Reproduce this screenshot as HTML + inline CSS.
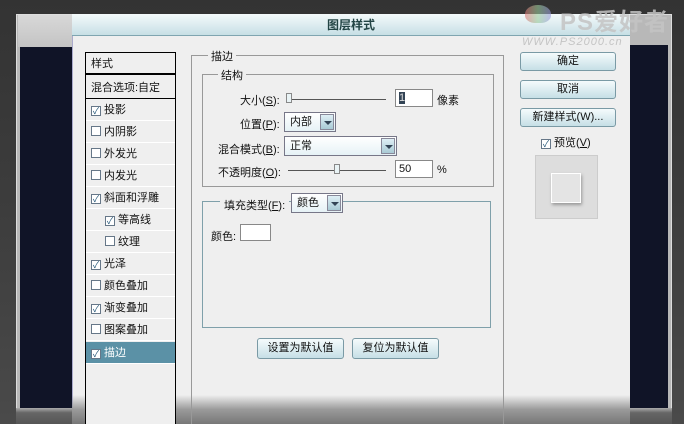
<!DOCTYPE html><html><head><meta charset="utf-8"><style>
*{margin:0;padding:0;box-sizing:border-box}
html,body{width:684px;height:424px;overflow:hidden}
body{background:linear-gradient(#333,#3d3d3d 50%,#4a4a4a);font-family:"Liberation Sans","Noto Sans CJK SC",sans-serif;font-size:11px;color:#111;position:relative}
.a{position:absolute}
.frame{left:16px;top:14px;width:656px;height:396px;background:#b8b8b8;border:1px solid #ddd}
.navy{background:#101427}
.dlg{left:72px;top:14px;width:558px;height:410px;background:#efefef;border-left:1px solid #aac;}
.title{left:72px;top:14px;width:558px;height:22px;background:linear-gradient(#f4fafb,#c7dfe5);border-bottom:1px solid #7fa5b0;text-align:center;font-weight:bold;color:#244;font-size:12px;line-height:22px}
.list{left:85px;top:52px;width:91px;height:372px;border:1px solid #000;border-bottom:0;background:#efefef}
.it{position:absolute;left:0;width:89px;height:22px;line-height:22px;padding-left:5px;border-bottom:1px solid #fff}
.cb{display:inline-block;width:10px;height:10px;border:1px solid #678;background:#fff;vertical-align:-1px;margin-right:3px;font-size:9px;line-height:8px;color:#257;text-align:center}
.fs{border:1px solid #999;}
.lbl{background:#efefef;padding:0 3px}
.inp{background:#fff;border:1px solid #888;height:18px;line-height:16px;padding-left:3px;font-size:11px}
.dd{background:linear-gradient(#fff,#e6f2f6);border:1px solid #778;height:20px;line-height:18px;padding-left:5px}
.arr{position:absolute;right:1px;top:1px;width:14px;height:16px;background:linear-gradient(#dfeff5,#a9cad5);border:1px solid #889}
.arr:after{content:"";position:absolute;left:3px;top:6px;border:4px solid transparent;border-top:4px solid #345;border-bottom:0}
.btn{background:linear-gradient(#f5fbfc,#c6dfe6);border:1px solid #7a9aa5;border-radius:3px;text-align:center;line-height:17px;font-size:11px}
.track{height:1px;background:#555}
.thumb{width:6px;height:10px;background:#e9f3f5;border:1px solid #888}
</style></head><body>
<div class="a frame"></div>
<div class="a" style="left:18px;top:15px;width:54px;height:32px;background:linear-gradient(#d8d8d8,#c4c4c4)"></div>
<div class="a navy" style="left:20px;top:47px;width:52px;height:361px"></div>
<div class="a navy" style="left:630px;top:45px;width:38px;height:363px"></div>
<div class="a" style="left:16px;top:408px;width:656px;height:16px;background:linear-gradient(#aaa,#666 30%,#555)"></div>
<div class="a dlg"></div>
<div class="a" style="left:72px;top:395px;width:558px;height:29px;background:linear-gradient(rgba(239,239,239,0),#9a9a9a 50%,#777)"></div>
<div class="a title">图层样式</div>
<div class="a" style="left:180px;top:395px;width:1px;height:29px"></div>
<div class="a" style="left:560px;top:2px;font-size:24px;color:#c4c4c4;font-weight:bold;letter-spacing:1px;opacity:.85">PS爱好者</div>
<div class="a" style="left:525px;top:5px;width:26px;height:18px;border-radius:50% 50% 40% 40%;background:linear-gradient(90deg,#d77,#9c9,#99d);opacity:.6"></div>
<div class="a" style="left:522px;top:36px;font-size:11px;color:#c4c4c4;font-style:italic;letter-spacing:1px">WWW.PS2000.cn</div>

<div class="a list">
<div class="it" style="top:0;border-bottom:2px solid #000">样式</div>
<div class="it" style="top:24px;border-bottom:1px solid #000">混合选项:自定</div>
<div class="it" style="top:46px"><span class="cb">✓</span>投影</div>
<div class="it" style="top:68px"><span class="cb"></span>内阴影</div>
<div class="it" style="top:90px"><span class="cb"></span>外发光</div>
<div class="it" style="top:112px"><span class="cb"></span>内发光</div>
<div class="it" style="top:134px"><span class="cb">✓</span>斜面和浮雕</div>
<div class="it" style="top:156px;padding-left:19px"><span class="cb">✓</span>等高线</div>
<div class="it" style="top:178px;padding-left:19px"><span class="cb"></span>纹理</div>
<div class="it" style="top:200px"><span class="cb">✓</span>光泽</div>
<div class="it" style="top:222px"><span class="cb"></span>颜色叠加</div>
<div class="it" style="top:244px"><span class="cb">✓</span>渐变叠加</div>
<div class="it" style="top:266px"><span class="cb"></span>图案叠加</div>
<div class="it" style="top:289px;background:#5b91a6;color:#fff"><span class="cb">✓</span>描边</div>
</div>

<div class="a fs" style="left:191px;top:55px;width:313px;height:369px;border-bottom:0"></div>
<div class="a lbl" style="left:208px;top:48px">描边</div>
<div class="a fs" style="left:202px;top:74px;width:292px;height:113px"></div>
<div class="a lbl" style="left:218px;top:67px">结构</div>

<div class="a" style="left:240px;top:92px">大小(<u>S</u>):</div>
<div class="a track" style="left:288px;top:99px;width:98px"></div>
<div class="a thumb" style="left:286px;top:93px"></div>
<div class="a inp" style="left:395px;top:89px;width:38px"><span style="background:#345;color:#ddd">1</span></div>
<div class="a" style="left:437px;top:92px">像素</div>

<div class="a" style="left:240px;top:116px">位置(<u>P</u>):</div>
<div class="a dd" style="left:284px;top:112px;width:52px">内部<span class="arr"></span></div>

<div class="a" style="left:218px;top:141px">混合模式(<u>B</u>):</div>
<div class="a dd" style="left:284px;top:136px;width:113px">正常<span class="arr"></span></div>

<div class="a" style="left:218px;top:164px">不透明度(<u>O</u>):</div>
<div class="a track" style="left:288px;top:170px;width:98px"></div>
<div class="a thumb" style="left:334px;top:164px"></div>
<div class="a inp" style="left:395px;top:160px;width:38px">50</div>
<div class="a" style="left:437px;top:164px">%</div>

<div class="a fs" style="left:202px;top:201px;width:289px;height:127px;border-color:#7fa0aa"></div>
<div class="a lbl" style="left:220px;top:197px;padding:0 4px 0 4px">填充类型(<u>F</u>):</div>
<div class="a dd" style="left:291px;top:193px;width:52px">颜色<span class="arr"></span></div>
<div class="a" style="left:211px;top:228px">颜色:</div>
<div class="a" style="left:240px;top:224px;width:31px;height:17px;background:#fff;border:1px solid #888"></div>

<div class="a btn" style="left:257px;top:338px;width:87px;height:21px;line-height:19px">设置为默认值</div>
<div class="a btn" style="left:352px;top:338px;width:87px;height:21px;line-height:19px">复位为默认值</div>

<div class="a btn" style="left:520px;top:52px;width:96px;height:19px">确定</div>
<div class="a btn" style="left:520px;top:80px;width:96px;height:19px">取消</div>
<div class="a btn" style="left:520px;top:108px;width:96px;height:19px">新建样式(W)...</div>
<div class="a" style="left:541px;top:134px"><span class="cb">✓</span>预览(<u>V</u>)</div>
<div class="a" style="left:535px;top:155px;width:63px;height:64px;background:#ddd;border:1px solid #ccc"></div>
<div class="a" style="left:551px;top:173px;width:30px;height:30px;background:#e4e4e4;border:1px solid #fff;box-shadow:1px 2px 3px #999"></div>
</body></html>
